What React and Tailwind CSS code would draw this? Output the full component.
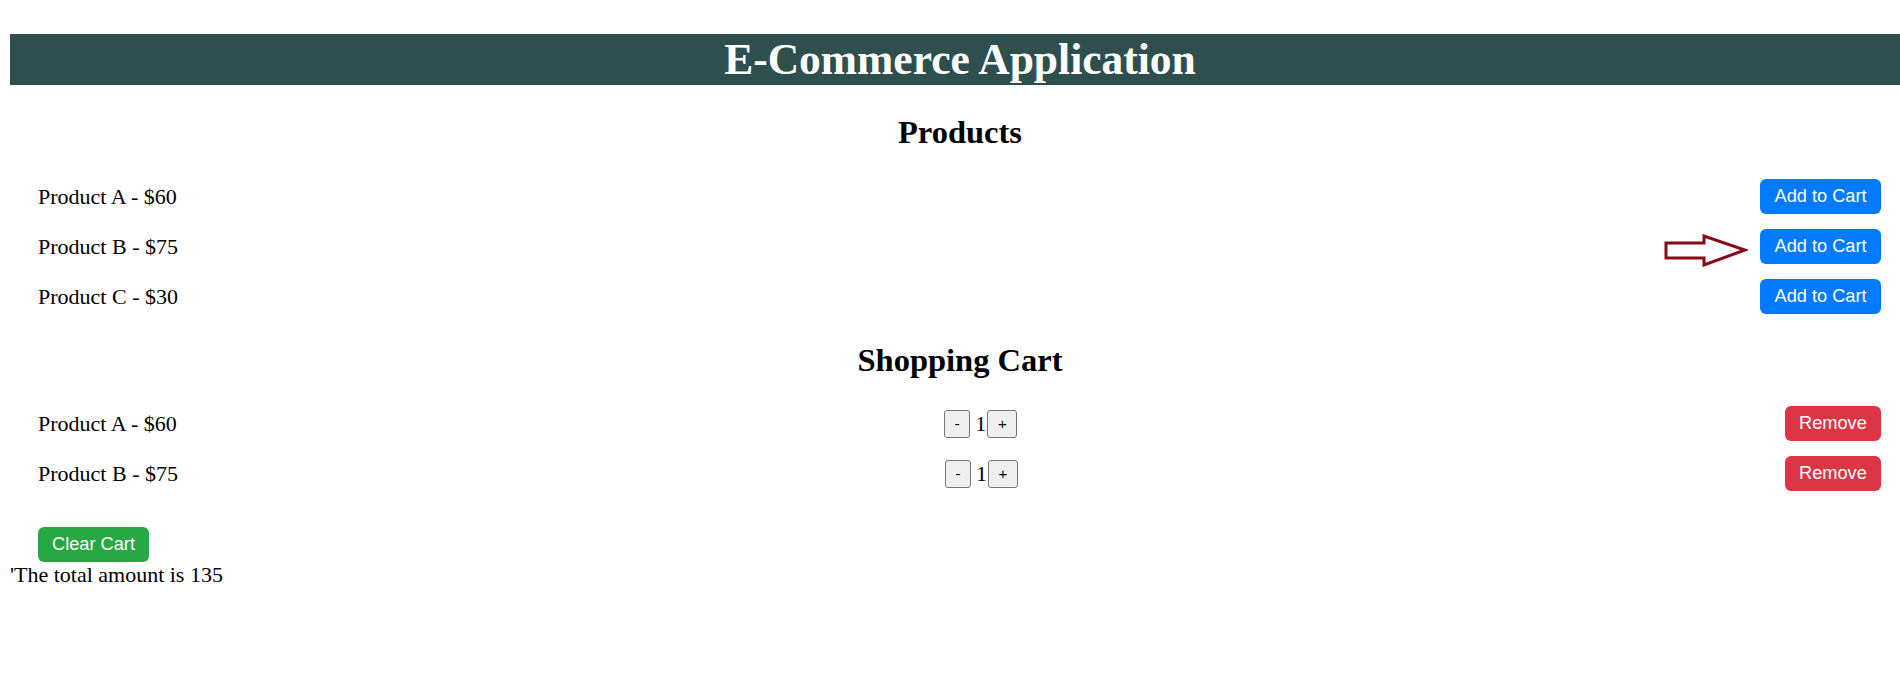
import React from 'react';

const products = [
  { name: 'Product A', price: 60 },
  { name: 'Product B', price: 75 },
  { name: 'Product C', price: 30 },
];

const cart = [
  { name: 'Product A', price: 60, qty: 1 },
  { name: 'Product B', price: 75, qty: 1 },
];

const btn =
  "h-[35px] rounded-[6px] text-white text-[18.2px] leading-none font-['Liberation_Sans',Arial,sans-serif] flex items-center justify-center";

const qtyBtn =
  "h-[28px] bg-[#efefef] border border-[#767676] rounded-[3px] text-[15px] leading-none font-['Liberation_Sans',Arial,sans-serif] text-black flex items-center justify-center";

export default function App() {
  const total = cart.reduce((sum, item) => sum + item.price * item.qty, 0);

  return (
    <div className="relative w-[1900px] h-[692px] overflow-hidden bg-white text-black font-['Liberation_Serif','Times_New_Roman',serif]">
      <div className="ml-[10px] w-[1900px] pt-[34px]">
        {/* Title bar */}
        <h1 className="h-[51px] bg-[#2f4f4f] text-white font-bold text-[43.5px] leading-none flex items-center justify-center">
          E-Commerce Application
        </h1>

        {/* Products */}
        <h2 className="mt-[29px] h-[37px] text-center font-bold text-[32.5px] leading-[37px]">
          Products
        </h2>
        <div className="mt-[28px] flex flex-col gap-[15px] pl-[28px] pr-[29px]">
          {products.map((p) => (
            <div key={p.name} className="h-[35px] flex items-center justify-between">
              <span className="text-[22px]">
                {p.name} - ${p.price}
              </span>
              <button className={`${btn} w-[121px] bg-[#007bff]`}>Add to Cart</button>
            </div>
          ))}
        </div>

        {/* Cart */}
        <h2 className="mt-[28px] h-[37px] text-center font-bold text-[32.5px] leading-[37px]">
          Shopping Cart
        </h2>
        <div className="mt-[27px] flex flex-col gap-[15px] pl-[28px] pr-[29px]">
          {cart.map((item) => (
            <div key={item.name} className="h-[35px] flex items-center justify-between">
              <span className="text-[22px]">
                {item.name} - ${item.price}
              </span>
              <div className="flex items-center">
                <button className={`${qtyBtn} w-[26px]`}>-</button>
                <span className="ml-[5px] mr-[1px] text-[22px] leading-none">{item.qty}</span>
                <button className={`${qtyBtn} w-[30px]`}>+</button>
              </div>
              <button className={`${btn} w-[96px] bg-[#dc3545]`}>Remove</button>
            </div>
          ))}
        </div>

        <div className="mt-[36px] pl-[28px]">
          <button className={`${btn} w-[111px] bg-[#28a745]`}>Clear Cart</button>
        </div>
        <p className="text-[22px] leading-[25px]">'The total amount is {total}</p>
      </div>

      {/* Annotation arrow pointing at the second button */}
      <svg
        className="absolute left-[1664px] top-[234px]"
        width="84"
        height="33"
        viewBox="0 0 84 33"
      >
        <path
          d="M2 9 H40 V2 L81 16 L40 31 V24 H2 Z"
          fill="none"
          stroke="#870a14"
          strokeWidth="3"
          strokeLinejoin="miter"
        />
      </svg>
    </div>
  );
}
